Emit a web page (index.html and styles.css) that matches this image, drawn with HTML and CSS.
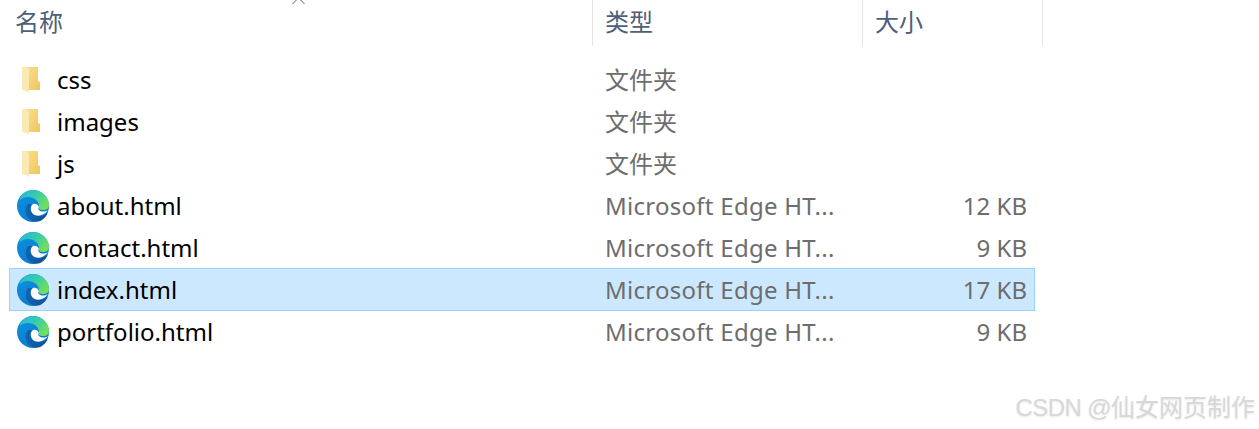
FILE: index.html
```html
<!DOCTYPE html>
<html lang="zh-CN">
<head>
  <meta charset="UTF-8">
  <title>文件列表</title>
  <link rel="stylesheet" href="styles.css">
</head>
<body>
  <svg class="defs" width="0" height="0" aria-hidden="true">
    <defs>
      <linearGradient id="edgeTop" x1="0" y1="0" x2="1" y2="0.6">
        <stop offset="0" stop-color="#27b6e0"/>
        <stop offset="0.5" stop-color="#33cbb0"/>
        <stop offset="1" stop-color="#74de5c"/>
      </linearGradient>
      <linearGradient id="edgeLeft" x1="0" y1="0" x2="0.6" y2="1">
        <stop offset="0" stop-color="#0a94e4"/>
        <stop offset="1" stop-color="#0f78cc"/>
      </linearGradient>
      <linearGradient id="edgeLow" x1="0" y1="0" x2="1" y2="0">
        <stop offset="0" stop-color="#0f66b2"/>
        <stop offset="1" stop-color="#114f96"/>
      </linearGradient>
      <linearGradient id="folderFront" x1="0" y1="0" x2="1" y2="1">
        <stop offset="0" stop-color="#f9dd8e"/>
        <stop offset="1" stop-color="#eec65e"/>
      </linearGradient>
      <symbol id="folder" viewBox="0 0 20 28">
        <path d="M6 1h11v14l2 1v8H6z" fill="url(#folderFront)"/>
        <path d="M1 1h5l2 3v23l-3-2-4-1z" fill="#fbe9b4"/>
      </symbol>
      <symbol id="edge" viewBox="0 0 32 32">
        <circle cx="16" cy="16" r="16" fill="url(#edgeLeft)"/>
        <path d="M3 8C6 3 11 0 16 0c9 0 16 7 16 15 0 4-3 5-6 5s-5-1-4-4c0-5-5-9-11-9-3 0-6 1-8 3z" fill="url(#edgeTop)"/>
        <path d="M11 14c-4 5-3 13 3 16 3 2 8 2 11 0s5-5 6-8c-3 4-9 5-13 3s-5-7-3-11z" fill="url(#edgeLow)"/>
        <path d="M22 17c-1-3-4-4-6-3-3 2-3 7 0 10 4 3 11 2 15-4-3 2-7 2-9 0-1-1-1-2 0-3z" fill="#fff"/>
      </symbol>
    </defs>
  </svg>

  <div class="caret"></div>

  <div class="head">
    <div class="col-name">名称</div>
    <div class="col-type">类型</div>
    <div class="col-size">大小</div>
  </div>

  <div class="rows">
    <div class="row">
      <div class="name"><svg class="ic-folder"><use href="#folder"/></svg>css</div>
      <div class="type">文件夹</div>
      <div class="size"></div>
    </div>
    <div class="row">
      <div class="name"><svg class="ic-folder"><use href="#folder"/></svg>images</div>
      <div class="type">文件夹</div>
      <div class="size"></div>
    </div>
    <div class="row">
      <div class="name"><svg class="ic-folder"><use href="#folder"/></svg>js</div>
      <div class="type">文件夹</div>
      <div class="size"></div>
    </div>
    <div class="row">
      <div class="name"><svg class="ic-edge"><use href="#edge"/></svg>about.html</div>
      <div class="type app">Microsoft Edge HT...</div>
      <div class="size">12 KB</div>
    </div>
    <div class="row">
      <div class="name"><svg class="ic-edge"><use href="#edge"/></svg>contact.html</div>
      <div class="type app">Microsoft Edge HT...</div>
      <div class="size">9 KB</div>
    </div>
    <div class="row selected">
      <div class="name"><svg class="ic-edge"><use href="#edge"/></svg>index.html</div>
      <div class="type app">Microsoft Edge HT...</div>
      <div class="size">17 KB</div>
    </div>
    <div class="row">
      <div class="name"><svg class="ic-edge"><use href="#edge"/></svg>portfolio.html</div>
      <div class="type app">Microsoft Edge HT...</div>
      <div class="size">9 KB</div>
    </div>
  </div>

  <div class="watermark"><span class="wm-latin">CSDN @</span>仙女网页制作</div>
</body>
</html>
```

FILE: styles.css
```css
:root {
  --head-text: #4c607a;
  --type-text: #6d6d6d;
  --divider: #e5e5e5;
  --select-bg: #cce8ff;
  --select-border: #99d1ff;
}

html, body {
  height: 100%;
}

body {
  margin: 0;
  position: relative;
  overflow: hidden;
  background: #fff;
  color: #000;
  font-family: "Noto Sans", "Noto Sans CJK SC", sans-serif;
  font-size: 24px;
}

.defs {
  display: block;
  height: 0;
}

.caret {
  position: absolute;
  left: 294px;
  top: -1px;
  width: 8px;
  height: 8px;
  border-left: 1px solid #8a8a8a;
  border-top: 1px solid #8a8a8a;
  transform: rotate(45deg);
}

.head {
  display: grid;
  grid-template-columns: 593px 270px 180px;
  height: 46px;
  margin-bottom: 13px;
  color: var(--head-text);
  font-size: 24px;
  line-height: 44px;
}

.col-name,
.col-type,
.col-size {
  padding-left: 12px;
  border-right: 1px solid var(--divider);
}

.col-name {
  padding-left: 15px;
}

.rows {
  display: flex;
  flex-direction: column;
  width: 1026px;
  margin-left: 9px;
}

.row {
  display: grid;
  grid-template-columns: 584px 270px 1fr;
  align-items: center;
  height: 42px;
  box-sizing: border-box;
  border: 1px solid transparent;
  line-height: 40px;
  white-space: nowrap;
}

.row.selected {
  background: var(--select-bg);
  border-color: var(--select-border);
  height: 43px;
  margin-top: -1px;
}

.name {
  display: flex;
  align-items: center;
  padding-left: 7px;
}

.ic-folder {
  width: 20px;
  height: 28px;
  margin: 0 16px 0 4px;
}

.ic-edge {
  width: 32px;
  height: 32px;
  margin-right: 8px;
}

.type {
  padding-left: 11px;
  color: var(--type-text);
}

.type.app {
  letter-spacing: 0.27px;
}

.size {
  padding-right: 7px;
  text-align: right;
  color: var(--type-text);
}

.watermark {
  position: absolute;
  right: 4px;
  top: 391px;
  color: #d8d8d8;
  font-family: "Liberation Sans", "Noto Sans CJK SC", sans-serif;
  font-size: 24px;
  line-height: 34px;
  text-shadow: 0 1px 2px rgba(0, 0, 0, 0.1);
  white-space: nowrap;
}

.wm-latin {
  letter-spacing: -0.6px;
}
```
